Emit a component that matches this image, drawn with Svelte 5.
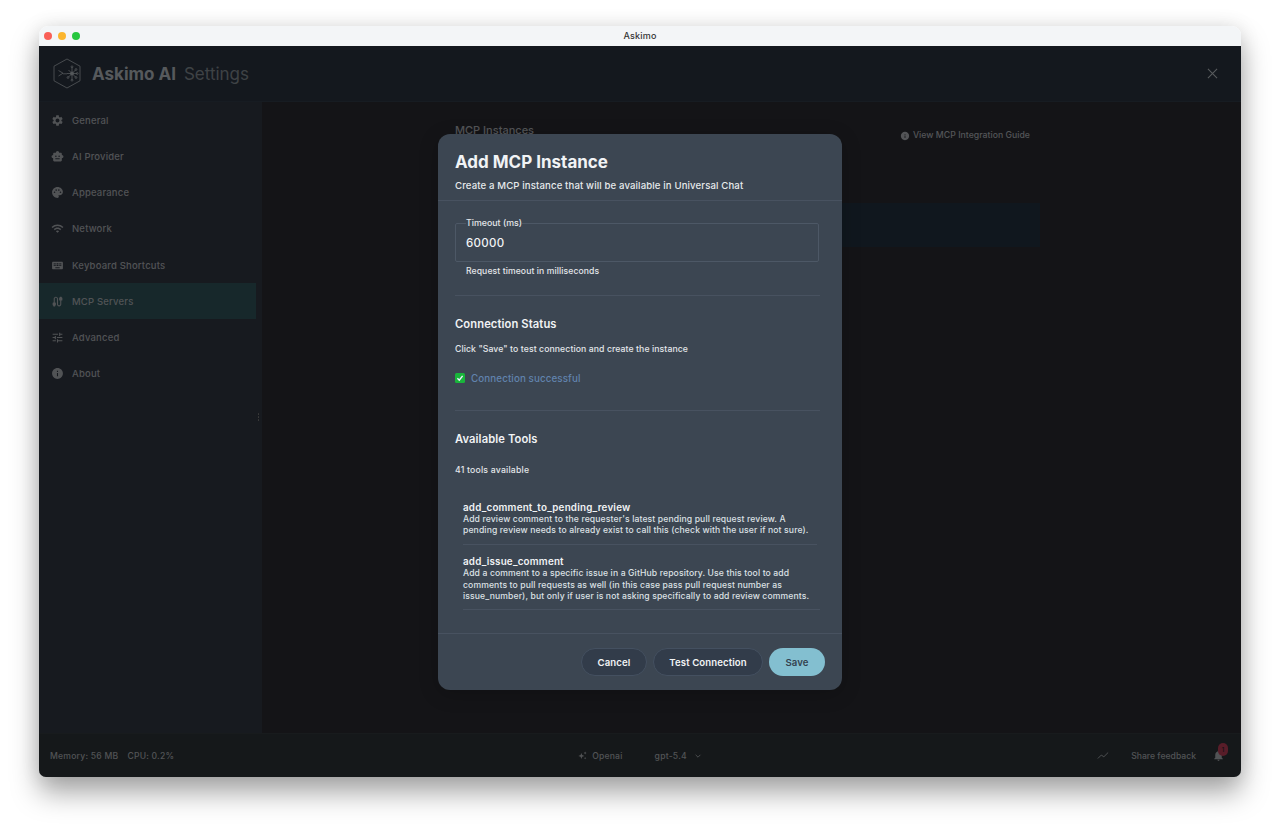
<script>
  const I = {
    gear: "M19.14 12.94c.04-.3.06-.61.06-.94 0-.32-.02-.64-.07-.94l2.03-1.58c.18-.14.23-.41.12-.61l-1.92-3.32c-.12-.22-.37-.29-.59-.22l-2.39.96c-.5-.38-1.03-.7-1.62-.94l-.36-2.54c-.04-.24-.24-.41-.48-.41h-3.84c-.24 0-.43.17-.47.41l-.36 2.54c-.59.24-1.13.57-1.62.94l-2.39-.96c-.22-.08-.47 0-.59.22L2.74 8.87c-.12.21-.08.47.12.61l2.03 1.58c-.05.3-.09.63-.09.94s.02.64.07.94l-2.03 1.58c-.18.14-.23.41-.12.61l1.92 3.32c.12.22.37.29.59.22l2.39-.96c.5.38 1.03.7 1.62.94l.36 2.54c.05.24.24.41.48.41h3.84c.24 0 .44-.17.47-.41l.36-2.54c.59-.24 1.13-.56 1.62-.94l2.39.96c.22.08.47 0 .59-.22l1.92-3.32c.12-.22.07-.47-.12-.61l-2.01-1.58zM12 15.6c-1.98 0-3.6-1.62-3.6-3.6s1.62-3.6 3.6-3.6 3.6 1.62 3.6 3.6-1.62 3.6-3.6 3.6z",
    bot: "M20 9V7c0-1.1-.9-2-2-2h-3c0-1.66-1.34-3-3-3S9 3.34 9 5H6c-1.1 0-2 .9-2 2v2c-1.66 0-3 1.34-3 3s1.34 3 3 3v4c0 1.1.9 2 2 2h12c1.1 0 2-.9 2-2v-4c1.66 0 3-1.34 3-3s-1.34-3-3-3zM7.5 11.5C7.5 10.67 8.17 10 9 10s1.5.67 1.5 1.5S9.83 13 9 13s-1.5-.67-1.5-1.5zM16 17H8v-2h8v2zm-1-4c-.83 0-1.5-.67-1.5-1.5S14.17 10 15 10s1.5.67 1.5 1.5S15.83 13 15 13z",
    palette: "M12 2C6.49 2 2 6.49 2 12s4.49 10 10 10c1.38 0 2.5-1.12 2.5-2.5 0-.61-.23-1.2-.64-1.67-.08-.1-.13-.21-.13-.33 0-.28.22-.5.5-.5H16c3.31 0 6-2.69 6-6 0-4.96-4.49-9-10-9zm5.5 11c-.83 0-1.5-.67-1.5-1.5s.67-1.5 1.5-1.5 1.5.67 1.5 1.5-.67 1.5-1.5 1.5zm-3-4c-.83 0-1.5-.67-1.5-1.5S13.67 6 14.5 6s1.5.67 1.5 1.5S15.33 9 14.5 9zM5 11.5c0-.83.67-1.5 1.5-1.5s1.5.67 1.5 1.5S7.33 13 6.5 13 5 12.33 5 11.5zm6-4c0 .83-.67 1.5-1.5 1.5S8 8.33 8 7.5 8.67 6 9.5 6s1.5.67 1.5 1.5z",
    wifi: "M1 9l2 2c4.97-4.97 13.03-4.97 18 0l2-2C16.93 2.93 7.08 2.93 1 9zm8 8l3 3 3-3c-1.65-1.66-4.34-1.66-6 0zm-4-4l2 2c2.76-2.76 7.24-2.76 10 0l2-2C15.14 9.14 8.87 9.14 5 13z",
    keyboard: "M20 5H4c-1.1 0-1.99.9-1.99 2L2 17c0 1.1.9 2 2 2h16c1.1 0 2-.9 2-2V7c0-1.1-.9-2-2-2zm-9 3h2v2h-2V8zm0 3h2v2h-2v-2zM8 8h2v2H8V8zm0 3h2v2H8v-2zm-1 2H5v-2h2v2zm0-3H5V8h2v2zm9 7H8v-2h8v2zm0-4h-2v-2h2v2zm0-3h-2V8h2v2zm3 3h-2v-2h2v2zm0-3h-2V8h2v2z",
    cable: "M20 5V4c0-.55-.45-1-1-1h-2c-.55 0-1 .45-1 1v1h-1v4c0 .55.45 1 1 1h1v7c0 1.1-.9 2-2 2s-2-.9-2-2V7c0-2.21-1.79-4-4-4S5 4.79 5 7v7H4c-.55 0-1 .45-1 1v4h1v1c0 .55.45 1 1 1h2c.55 0 1-.45 1-1v-1h1v-4c0-.55-.45-1-1-1H7V7c0-1.1.9-2 2-2s2 .9 2 2v10c0 2.21 1.79 4 4 4s4-1.79 4-4v-7h1c.55 0 1-.45 1-1V5h-1z",
    tune: "M3 17v2h6v-2H3zM3 5v2h10V5H3zm10 16v-2h8v-2h-8v-2h-2v6h2zM7 9v2H3v2h4v2h2V9H7zm14 4v-2H11v2h10zm-6-4h2V7h4V5h-4V3h-2v6z",
    info: "M12 2C6.48 2 2 6.48 2 12s4.48 10 10 10 10-4.48 10-10S17.52 2 12 2zm1 15h-2v-6h2v6zm0-8h-2V7h2v2z"
  };
  const nav = [
    ["General", I.gear], ["AI Provider", I.bot], ["Appearance", I.palette], ["Network", I.wifi],
    ["Keyboard Shortcuts", I.keyboard], ["MCP Servers", I.cable], ["Advanced", I.tune], ["About", I.info]
  ];
  const tools = [
    ["add_comment_to_pending_review", ["Add review comment to the requester's latest pending pull request review. A", "pending review needs to already exist to call this (check with the user if not sure)."]],
    ["add_issue_comment", ["Add a comment to a specific issue in a GitHub repository. Use this tool to add", "comments to pull requests as well (in this case pass pull request number as", "issue_number), but only if user is not asking specifically to add review comments."]],
    ["assign_copilot_to_issue", ["Assign Copilot to a specific issue in a GitHub repository."]]
  ];
</script>

<div class="page">
  <div class="window">
    <div class="titlebar">
      <div class="lights"><span class="red"></span><span class="yellow"></span><span class="green"></span></div>
      <span class="wintitle">Askimo</span>
    </div>
    <div class="app">
      <header class="head">
        <svg class="logo" viewBox="0 0 28 31" fill="none" stroke="currentColor" stroke-width=".8">
          <path d="M14 1 27 8.2V22.8L14 30 1 22.8V8.2Z" />
          <path d="M5.5 12.5 10 15.2 5.5 18M10 15.8h4" />
          <path d="M19 9.5V21.5M14 15.5H24M15.5 12 22.5 19M22.5 12 15.5 19" />
          <circle cx="19" cy="15.5" r="1.5" fill="currentColor" />
          <circle cx="19" cy="8.8" r=".9" /><circle cx="19" cy="22.2" r=".9" /><circle cx="24.2" cy="15.5" r=".9" />
          <circle cx="23" cy="11.5" r=".9" /><circle cx="23" cy="19.5" r=".9" /><circle cx="15" cy="19.5" r=".9" />
        </svg>
        <span class="brand">Askimo AI</span>
        <span class="section">Settings</span>
        <svg class="close" viewBox="0 0 12 12" fill="none" stroke="currentColor" stroke-width="1.1"><path d="M1 1 11 11M11 1 1 11" /></svg>
      </header>
      <div class="middle">
        <nav class="side">
          {#each nav as [label, d]}
            <div class="item" class:active={label === "MCP Servers"}>
              <svg viewBox="0 0 24 24" fill="currentColor"><path {d} /></svg>
              <span>{label}</span>
            </div>
          {/each}
          <div class="grip"><i></i><i></i><i></i></div>
        </nav>
        <main class="main">
          <div class="content">
            <div class="mainhead">
              <h2>MCP Instances</h2>
              <div class="guide"><svg viewBox="0 0 24 24" fill="currentColor"><path d={I.info} /></svg>View MCP Integration Guide</div>
            </div>
            <div class="empty"></div>
          </div>
        </main>
      </div>
      <footer class="status">
        <div class="st-left"><span>Memory: 56 MB</span><span>CPU: 0.2%</span></div>
        <div class="st-mid">
          <span class="prov">
            <svg viewBox="0 0 12 12" fill="currentColor"><path d="M4.5 2.5 5.6 5.4 8.5 6.5 5.6 7.6 4.5 10.5 3.4 7.6.5 6.5 3.4 5.4ZM9.5 .8l.6 1.3 1.3.6-1.3.6-.6 1.3-.6-1.3-1.3-.6 1.3-.6ZM9.5 8l.5 1 1 .5-1 .5-.5 1-.5-1-1-.5 1-.5Z" /></svg>
            Openai
          </span>
          <span class="model">gpt-5.4
            <svg viewBox="0 0 10 10" fill="none" stroke="currentColor" stroke-width="1.1"><path d="M2 3.5 5 6.5 8 3.5" /></svg>
          </span>
        </div>
        <div class="st-right">
          <svg class="trend" viewBox="0 0 14 10" fill="none" stroke="currentColor" stroke-width="1.1"><path d="M1 8.5 5 4.5 8 6.5 13 1.5" /></svg>
          <span class="share">Share feedback</span>
          <span class="bell">
            <svg viewBox="0 0 24 24" fill="currentColor"><path d="M12 22c1.1 0 2-.9 2-2h-4c0 1.1.9 2 2 2zm6-6v-5c0-3.07-1.63-5.64-4.5-6.32V4c0-.83-.67-1.5-1.5-1.5s-1.5.67-1.5 1.5v.68C7.64 5.36 6 7.92 6 11v5l-2 2v1h16v-1l-2-2z" /></svg>
            <b>1</b>
          </span>
        </div>
      </footer>
      <div class="overlay"></div>
      <section class="modal">
        <div class="m-head">
          <h1>Add MCP Instance</h1>
          <p>Create a MCP instance that will be available in Universal Chat</p>
        </div>
        <div class="m-body">
          <fieldset class="field">
            <legend>Timeout (ms)</legend>
            <span>60000</span>
          </fieldset>
          <p class="help">Request timeout in milliseconds</p>
          <hr class="first" />
          <h3>Connection Status</h3>
          <p class="note">Click "Save" to test connection and create the instance</p>
          <div class="ok">
            <svg viewBox="0 0 10 10"><rect width="10" height="10" rx="1.5" fill="#19b53b" /><path d="M2.4 5.2 4.3 7.2 7.6 2.8" fill="none" stroke="#eef" stroke-width="1.4" /></svg>
            <span>Connection successful</span>
          </div>
          <hr class="second" />
          <h3>Available Tools</h3>
          <p class="count">41 tools available</p>
          <div class="tools">
            {#each tools as [name, lines]}
              <div class="tool">
                <div class="tname">{name}</div>
                {#each lines as line}<div class="tdesc">{line}</div>{/each}
              </div>
            {/each}
          </div>
        </div>
        <div class="m-foot">
          <button class="ghost">Cancel</button>
          <button class="ghost test">Test Connection</button>
          <button class="save">Save</button>
        </div>
      </section>
    </div>
  </div>
</div>

<style>
  :global(body) { margin: 0; background: #fff; font-family: Inter, "Liberation Sans", sans-serif; }
  .page { height: 829px; box-sizing: border-box; padding: 26px 39px 52px; overflow: hidden; }
  .window {
    height: 751px; display: flex; flex-direction: column; border-radius: 9px 9px 7px 7px;
    box-shadow: 0 16px 28px rgba(0,0,0,.34), 0 0 20px rgba(0,0,0,.1); overflow: hidden;
  }
  .titlebar {
    height: 20px; flex: none; background: #f3f5f7; display: flex; align-items: center; justify-content: center; position: relative;
    box-sizing: border-box; padding-bottom: 2px;
  }
  .lights { position: absolute; left: 5px; top: 6px; display: flex; gap: 6px; }
  .lights span { width: 8px; height: 8px; border-radius: 50%; }
  .red { background: #f95f57; } .yellow { background: #fbb52e; } .green { background: #27c73f; }
  .wintitle { font-size: 9px; font-weight: 500; color: #333; letter-spacing: .2px; }

  .app { flex: 1; display: flex; flex-direction: column; position: relative; min-height: 0; }
  .head {
    height: 56px; flex: none; background: #29313d; border-bottom: 1px solid #2f3845; box-sizing: border-box;
    display: flex; align-items: center; padding: 0 23px 0 14px; color: #adb3b9;
  }
  .logo { width: 28px; height: 31px; margin-right: 11px; color: #a9b0b6; }
  .brand { font-size: 17px; font-weight: 700; margin-right: 8px; }
  .section { font-size: 17px; font-weight: 400; color: #7d848b; }
  .close { width: 11px; height: 11px; margin-left: auto; color: #b3b8bd; }

  .middle { flex: 1; display: flex; min-height: 0; }
  .side { width: 223px; flex: none; background: #2f343f; position: relative; }
  .item {
    width: 217px; height: 36.15px; display: flex; align-items: center; gap: 8px; padding: 1px 0 0 12px; box-sizing: border-box;
    color: #a2a6ab; font-size: 9.5px; font-weight: 500; letter-spacing: .18px;
  }
  .item svg { width: 13px; height: 13px; flex: none; }
  .active { background: #2e5157; }
  .grip { position: absolute; right: 3px; top: 311px; display: flex; flex-direction: column; gap: 1.5px; }
  .grip i { width: 1.5px; height: 1.5px; background: #777; border-radius: 50%; }

  .main { flex: 1; background: #28292f; padding-left: 183px; }
  .content { width: 595px; }
  .mainhead { display: flex; align-items: flex-start; justify-content: space-between; padding: 20px 10px 1px; height: 20px; }
  .mainhead h2 { margin: 0; font-size: 11px; line-height: 16px; font-weight: 500; color: #a6a9ae; }
  .guide { display: flex; align-items: center; gap: 3px; margin-top: 8px; font-size: 8.7px; line-height: 11px; font-weight: 500; color: #a6a9ae; letter-spacing: .02px; }
  .guide svg { width: 10px; height: 10px; }
  .empty { height: 44px; margin-top: 60px; background: #212f3c; }

  .status {
    height: 44px; flex: none; background: #2a3034; border-top: 1px solid #30363b; box-sizing: border-box;
    display: grid; grid-template-columns: 1fr auto 1fr; align-items: center; padding: 0 14px 0 11px;
    font-size: 8.6px; font-weight: 500; letter-spacing: .22px; color: #a2a6aa;
  }
  .st-left { display: flex; gap: 9px; }
  .st-mid { display: flex; align-items: center; gap: 32px; margin-left: 3px; }
  .prov, .model { display: flex; align-items: center; gap: 5px; }
  .prov svg { width: 9px; height: 9px; }
  .model { gap: 7px; }
  .model svg { width: 8px; height: 8px; }
  .st-right { display: flex; align-items: center; justify-content: flex-end; }
  .share { letter-spacing: .02px; }
  .trend { width: 12px; height: 9px; margin-right: 22px; }
  .bell { position: relative; width: 13px; height: 13px; margin-left: 16px; margin-right: 2px; }
  .bell svg { width: 13px; height: 13px; display: block; }
  .bell b {
    position: absolute; left: 6px; top: -6px; width: 10px; height: 13px; border-radius: 6px; background: #b03a52;
    color: #222; font-size: 6px; font-weight: 500; text-align: center; line-height: 13px;
  }

  .overlay { position: absolute; inset: 0; background: rgba(0,0,0,.5); }
  .modal {
    position: absolute; left: 399px; top: 88px; width: 404px; height: 556px; border-radius: 12px; background: #3c4652;
    display: flex; flex-direction: column; color: #f1f3f5; box-shadow: 0 4px 20px rgba(0,0,0,.2);
  }
  .m-head { height: 67px; flex: none; box-sizing: border-box; border-bottom: 1px solid #485260; padding: 17px 17px 0; }
  .m-head h1 { margin: 0; font-size: 17px; line-height: 22px; font-weight: 700; }
  .m-head p { margin: 6px 0 0; font-size: 9.6px; line-height: 13px; font-weight: 500; letter-spacing: .13px; color: #e7eaec; }
  .m-body { flex: 1; min-height: 0; overflow: hidden; padding: 0 22px 0 17px; }
  .field {
    margin: 16px 1px 0 0; padding: 0 10px; height: 45px; box-sizing: border-box; border: 1px solid #4d5866; border-radius: 2px;
    display: flex; align-items: center; min-width: 0;
  }
  .field legend { font-size: 8.8px; font-weight: 500; line-height: 12px; padding: 0; letter-spacing: 0; color: #e4e7ea; }
  .field span { font-size: 11.5px; font-weight: 500; letter-spacing: .3px; position: relative; top: -2px; }
  .help { margin: 3px 0 0 11px; font-size: 8.6px; line-height: 12px; font-weight: 500; letter-spacing: .1px; color: #e4e7ea; }
  hr { border: 0; height: 1px; background: #485260; margin: 0; }
  hr.first { margin-top: 18px; }
  h3 { margin: 0; font-size: 11.2px; line-height: 15px; font-weight: 600; letter-spacing: .1px; }
  hr.first + h3 { margin-top: 21px; }
  .note { margin: 11px 0 0; font-size: 8.7px; line-height: 12px; font-weight: 500; letter-spacing: .08px; color: #e4e7ea; }
  .ok { display: flex; align-items: center; gap: 6px; margin-top: 17px; height: 12px; }
  .ok svg { width: 10px; height: 10px; }
  .ok span { font-size: 9.8px; font-weight: 500; letter-spacing: .1px; color: #6183ad; }
  hr.second { margin-top: 26px; }
  hr.second + h3 { margin-top: 21px; }
  .count { margin: 17px 0 0; font-size: 8.7px; line-height: 12px; font-weight: 500; letter-spacing: .2px; color: #e4e7ea; }
  .tools { margin: 26px 0 0 8px; }
  .tool { border-bottom: 1px solid #485260; padding-bottom: 7px; margin-bottom: 11px; }
  .tool:first-child { margin-right: 3px; padding-bottom: 8px; }
  .tname { font-size: 9.8px; line-height: 12px; font-weight: 600; letter-spacing: .22px; }
  .tdesc { font-size: 8.6px; line-height: 11.2px; font-weight: 500; letter-spacing: .13px; color: #dde1e5; white-space: nowrap; }
  .m-foot {
    height: 57px; flex: none; box-sizing: border-box; border-top: 1px solid #485260; display: flex; align-items: center;
    justify-content: flex-end; gap: 6px; padding: 0 17px; margin-top: 11px;
  }
  button { font-family: inherit; height: 28px; border-radius: 14px; font-size: 9.6px; font-weight: 600; padding: 0; letter-spacing: .1px; }
  .ghost { width: 66px; background: #323c4a; border: 1px solid #445060; color: #f1f3f5; }
  .test { width: 110px; }
  .save { width: 56px; background: #83bfd0; border: 0; color: #34424f; }
</style>
